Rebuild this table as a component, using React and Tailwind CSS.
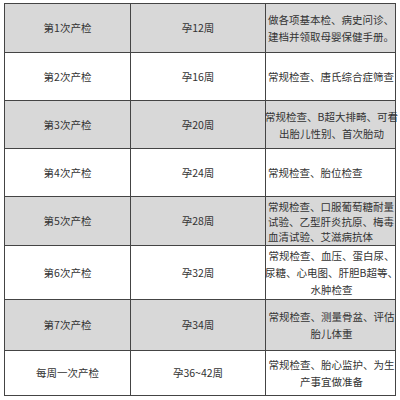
import React from 'react'

const rows = [
  { name: '第1次产检', week: '孕12周', lines: ['做各项基本检、病史问诊、', '建档并领取母婴保健手册。'], align: 'left', h: 'h-[49px]' },
  { name: '第2次产检', week: '孕16周', lines: ['常规检查、唐氏综合症筛查'], align: 'left', h: 'h-[48px]' },
  { name: '第3次产检', week: '孕20周', lines: ['常规检查、B超大排畸、可看', '出胎儿性别、首次胎动'], align: 'center', h: 'h-[48px]' },
  { name: '第4次产检', week: '孕24周', lines: ['常规检查、胎位检查'], align: 'left', h: 'h-[48px]' },
  { name: '第5次产检', week: '孕28周', lines: ['常规检查、口服葡萄糖耐量', '试验、乙型肝炎抗原、梅毒', '血清试验、艾滋病抗体'], align: 'left', h: 'h-[49px]', tight: true },
  { name: '第6次产检', week: '孕32周', lines: ['常规检查、血压、蛋白尿、', '尿糖、心电图、肝胆B超等、', '水肿检查'], align: 'center', h: 'h-[54px]' },
  { name: '第7次产检', week: '孕34周', lines: ['常规检查、测量骨盆、评估', '胎儿体重'], align: 'center', h: 'h-[51px]' },
  { name: '每周一次产检', week: '孕36~42周', lines: ['常规检查、胎心监护、为生', '产事宜做准备'], align: 'center', h: 'h-[44px]' },
]

export default function App() {
  return (
    <div className="w-[400px] h-[400px] bg-white pt-[3px] pl-[4px] text-[#333]" style={{ fontFamily: '"Noto Sans CJK SC", "Noto Sans", sans-serif' }}>
      <div className="w-[392px] border border-[#444]">
        {rows.map((r, i) => (
          <div
            key={r.name}
            className={`grid grid-cols-[126px_135px_129px] ${r.h} ${i < rows.length - 1 ? 'border-b border-[#444]' : ''} ${i % 2 === 0 ? 'bg-[#d8d8d8]' : 'bg-white'}`}
          >
            <div className="flex items-center justify-center border-r border-[#444] text-[10.5px]">{r.name}</div>
            <div className="flex items-center justify-center border-r border-[#444] text-[10.5px]">{r.week}</div>
            <div
              className={`flex flex-col justify-center pl-[2px] text-[10.5px] whitespace-nowrap ${r.tight ? 'leading-[15px]' : 'leading-[17px]'} ${r.align === 'center' ? 'items-center text-center' : 'items-start'}`}
            >
              {r.lines.map((l) => (
                <div key={l}>{l}</div>
              ))}
            </div>
          </div>
        ))}
      </div>
    </div>
  )
}
